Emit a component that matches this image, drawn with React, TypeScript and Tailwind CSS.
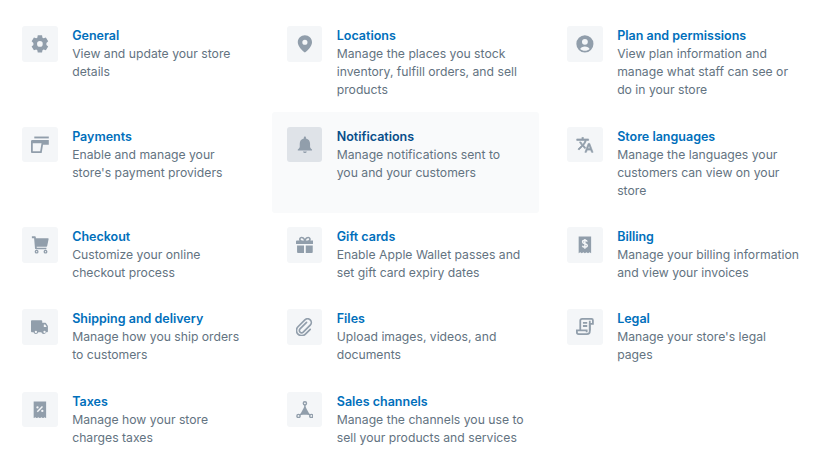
import React from "react";

type Item = { title: React.ReactNode; lines: string[]; icon: React.ReactNode; active?: boolean };

const Glyph = ({ children, vb = "0 0 20 20" }: { children: React.ReactNode; vb?: string }) => (
  <svg viewBox={vb} className="h-[17.8px] w-[17.8px] fill-[#919eab]">
    {children}
  </svg>
);

const Gear = () => (
  <Glyph>
    <path
      fillRule="evenodd"
      d="M7.6 0.4h4.8l.5 2.6 1.3.75 2.5-.9 2.6 4.3-2 1.75v2.2l2 1.75-2.6 4.3-2.500-.9-1.300.75-.5 2.600H7.600l-.5-2.600-1.300-.75-2.500.9-2.600-4.300 2-1.750v-2.200l-2-1.750 2.600-4.300 2.500.9 1.300-.75zM10 6.800a3.200 3.200 0 1 0 0 6.400 3.200 3.200 0 0 0 0-6.400z"
    />
  </Glyph>
);
const Card = () => (
  <Glyph>
    <path d="M3.700.6H20v2.100H3.700z" />
    <path
      fillRule="evenodd"
      d="M1.500 4.500H20v5.400h-6.500L12 19H1a1 1 0 0 1-1-1V6a1.500 1.500 0 0 1 1.500-1.500zM2 8.200V17h8.300l1.500-8.800z"
    />
  </Glyph>
);
const Cart = () => (
  <Glyph>
    <path
      fillRule="evenodd"
      d="M1 .4h3.400a1 1 0 0 1 1 .9l.1 1.100H19a.8.8 0 0 1 .8 1l-1.600 7.800a1 1 0 0 1-1 .8H6.400l.1 1.200h10.800v1.800H5.500a1 1 0 0 1-1-.9L3.500 2.400H1zM6.300 15.400a2.200 2.200 0 1 1-.01 4.400 2.200 2.200 0 0 1 .01-4.400zm0 1.500a.7.7 0 1 0 .01 1.400.7.7 0 0 0-.01-1.400zm10 -1.500a2.200 2.200 0 1 1-.01 4.400 2.200 2.200 0 0 1 .01-4.400zm0 1.500a.7.7 0 1 0 .01 1.400.7.7 0 0 0-.01-1.400z"
    />
  </Glyph>
);
const Truck = () => (
  <Glyph>
    <path
      fillRule="evenodd"
      d="M1 2.400h10.600a1 1 0 0 1 1 1v1.800h3.400a1 1 0 0 1 .8.4l2 3.200c.1.200.2.400.2.600V15a1 1 0 0 1-1 1h-1a2.800 2.800 0 0 1-5.400 0H8.200a2.800 2.800 0 0 1-5.400 0H1a1 1 0 0 1-1-1V3.400a1 1 0 0 1 1-1zM5.500 14.300a1.300 1.300 0 1 0 0 2.600 1.300 1.300 0 0 0 0-2.600zm9.700 0a1.300 1.300 0 1 0 0 2.600 1.300 1.300 0 0 0 0-2.600zM14.400 7.400v2.800h3.200l-1.600-2.800z"
    />
  </Glyph>
);
const Receipt = ({ children }: { children: React.ReactNode }) => (
  <Glyph>
    <path
      fillRule="evenodd"
      d="M3 .6h14v18.800l-1.750-1.200-1.750 1.200-1.750-1.200-1.750 1.200-1.750-1.200-1.750 1.200-1.750-1.200L3 19.400z"
    />
    {children}
  </Glyph>
);
const Pin = () => (
  <Glyph>
    <path
      fillRule="evenodd"
      d="M10 .4c4.400 0 8 3.400 8 7.700 0 4.600-5 9.600-8 11.500-3-1.900-8-6.900-8-11.500C2 3.800 5.600.4 10 .4zm0 4.800a2.900 2.900 0 1 0 0 5.800 2.900 2.900 0 0 0 0-5.800z"
    />
  </Glyph>
);
const Bell = () => (
  <Glyph>
    <path d="M10 .6c.7 0 1.200.5 1.200 1.200v.9c3 .6 4.600 3 4.600 6v3.400c0 1 1.200 2.200 2.200 3.200v.9H2v-.9c1-1 2.200-2.200 2.200-3.200V8.700c0-3 1.600-5.400 4.600-6v-.9C8.800 1.100 9.300.6 10 .6z" />
    <path d="M7.800 17.400h4.400c-.2 1-1.100 1.800-2.200 1.800s-2-.8-2.200-1.800z" />
  </Glyph>
);
const Gift = () => (
  <Glyph>
    <path
      fillRule="evenodd"
      d="M6.400.8c1.500 0 2.800.9 3.600 2.200C10.800 1.700 12.100.8 13.600.8c1.700 0 3 1.200 3 2.800 0 .6-.2 1.100-.5 1.500H19a1 1 0 0 1 1 1v3H0v-3a1 1 0 0 1 1-1h2.900a2.700 2.700 0 0 1-.5-1.500C3.400 2 4.700.8 6.400.8zm0 1.700c-.6 0-1.200.5-1.200 1.100 0 .8.900 1.500 3.800 1.500-.4-1.400-1.400-2.600-2.600-2.600zm7.200 0c-1.200 0-2.200 1.200-2.600 2.600 2.900 0 3.800-.7 3.800-1.500 0-.6-.6-1.100-1.200-1.100z"
    />
    <path d="M1.200 10.800H9V19H2.200a1 1 0 0 1-1-1zM11 10.800h7.800V18a1 1 0 0 1-1 1H11z" />
  </Glyph>
);
const Clip = () => (
  <svg viewBox="0 0 20 20" className="h-[17.8px] w-[17.8px] fill-none stroke-[#919eab] stroke-[1.9]">
    <path
      strokeLinecap="round"
      d="M12.500 5.200 5 12.700a2.600 2.600 0 0 0 3.700 3.700l8-8a4.300 4.300 0 0 0-6.100-6.100L2.700 10.200a6 6 0 0 0 8.500 8.500l5.500-5.500"
      transform="translate(-.4 -.2) scale(.98)"
    />
  </svg>
);
const Channels = () => (
  <Glyph>
    <path d="M10 6.500c.4 0 .7.2.9.5l4 7.200c.3.600-.1 1.300-.8 1.300H5.900c-.7 0-1.100-.7-.8-1.300l4-7.200c.2-.3.500-.5.900-.5z" />
    <path d="M9.200 4h1.600v4H9.200zM4 14.900l3.500-2 .8 1.400-3.500 2zM16 14.900l-3.500-2-.8 1.400 3.500 2z" />
    <path
      fillRule="evenodd"
      d="M10 0a2.600 2.600 0 1 1 0 5.200A2.600 2.600 0 0 1 10 0zm0 1.600a1 1 0 1 0 0 2 1 1 0 0 0 0-2zM2.800 14.200a2.600 2.600 0 1 1 0 5.200 2.600 2.600 0 0 1 0-5.200zm0 1.600a1 1 0 1 0 0 2 1 1 0 0 0 0-2zM17.200 14.200a2.600 2.600 0 1 1 0 5.200 2.600 2.600 0 0 1 0-5.200zm0 1.600a1 1 0 1 0 0 2 1 1 0 0 0 0-2z"
    />
  </Glyph>
);
const User = () => (
  <Glyph>
    <path
      fillRule="evenodd"
      d="M10 .4a9.600 9.600 0 1 1 0 19.200A9.600 9.600 0 0 1 10 .4zm0 4a3.300 3.300 0 1 0 0 6.600 3.300 3.300 0 0 0 0-6.600zm-5.300 11.300c1.300 1.300 3.200 2 5.300 2s4-.7 5.300-2c-.6-1.600-2.800-2.800-5.300-2.800s-4.700 1.200-5.300 2.800z"
    />
  </Glyph>
);
const Translate = () => (
  <svg viewBox="0 0 24 24" className="h-[17.8px] w-[17.8px] fill-[#919eab] stroke-[#919eab] stroke-[0.9]">
    <path d="M12.870 15.070l-2.540-2.510.03-.03c1.740-1.940 2.980-4.170 3.710-6.530H17V4h-7V2H8v2H1v1.990h11.170C11.500 7.920 10.440 9.750 9 11.350 8.070 10.320 7.300 9.190 6.690 8h-2c.73 1.630 1.730 3.170 2.980 4.560l-5.090 5.020L4 19l5-5 3.110 3.110.76-2.040zM18.500 10h-2L12 22h2l1.120-3h4.750L21 22h2l-4.500-12zm-2.620 7l1.620-4.330L19.120 17h-3.240z" />
  </svg>
);
const Scroll = () => (
  <svg viewBox="0 0 20 20" className="h-[17.8px] w-[17.8px] fill-none stroke-[#919eab] stroke-[2]">
    <path d="M4.800 14V3.200A2.200 2.200 0 0 1 7 1h10.500a1.500 1.500 0 0 1 1.500 1.500V6.500h-3.500V14" />
    <path d="M15.500 3v11.800a3.200 3.200 0 0 1-3.200 3.200H3a2 2 0 0 1-2-2v-2h11v2" />
    <path d="M7.800 5.400h4.800M7.800 9h4.800" />
  </svg>
);

const columns: Item[][] = [
  [
    { title: "General", lines: ["View and update your store", "details"], icon: <Gear /> },
    { title: "Payments", lines: ["Enable and manage your", "store's payment providers"], icon: <Card /> },
    { title: "Checkout", lines: ["Customize your online", "checkout process"], icon: <Cart /> },
    { title: "Shipping and delivery", lines: ["Manage how you ship orders", "to customers"], icon: <Truck /> },
    {
      title: "Taxes",
      lines: ["Manage how your store", "charges taxes"],
      icon: (
        <Receipt>
          <path className="fill-[#f4f6f8]" d="M12.300 5.600l1.200 1.200-5.800 5.800-1.200-1.200z" />
          <circle className="fill-[#f4f6f8]" cx="7.300" cy="7.200" r="1.300" />
          <circle className="fill-[#f4f6f8]" cx="12.700" cy="11.200" r="1.300" />
        </Receipt>
      ),
    },
  ],
  [
    { title: "Locations", lines: ["Manage the places you stock", "inventory, fulfill orders, and sell", "products"], icon: <Pin /> },
    { title: "Notifications", lines: ["Manage notifications sent to", "you and your customers"], icon: <Bell />, active: true },
    { title: "Gift cards", lines: ["Enable Apple Wallet passes and", "set gift card expiry dates"], icon: <Gift /> },
    { title: "Files", lines: ["Upload images, videos, and", "documents"], icon: <Clip /> },
    { title: "Sales channels", lines: ["Manage the channels you use to", "sell your products and services"], icon: <Channels /> },
  ],
  [
    { title: "Plan and permissions", lines: ["View plan information and", "manage what staff can see or", "do in your store"], icon: <User /> },
    { title: "Store languages", lines: ["Manage the languages your", "customers can view on your", "store"], icon: <Translate /> },
    {
      title: "Billing",
      lines: ["Manage your billing information", "and view your invoices"],
      icon: (
        <Receipt>
          <path
            className="fill-none stroke-[#f4f6f8] stroke-[1.6]"
            d="M12.600 6.300c-.3-1-1.300-1.500-2.600-1.500-1.500 0-2.600.7-2.600 1.900 0 2.700 5.300 1.400 5.300 4.100 0 1.200-1.200 1.900-2.700 1.900-1.400 0-2.500-.6-2.800-1.700M10 3.400v11"
          />
        </Receipt>
      ),
    },
    { title: "Legal", lines: ["Manage your store's legal", "pages"], icon: <Scroll /> },
  ],
];

function Row({ item }: { item: Item }) {
  return (
    <div className={`flex gap-[14.4px] rounded-[3px] p-[14.2px] pl-[14.4px] ${item.active ? "bg-[#f9fafb]" : ""}`}>
      <div
        className={`flex h-[35.6px] w-[35.6px] shrink-0 items-center justify-center rounded-[3px] ${
          item.active ? "bg-[#dfe3e8]" : "bg-[#f4f6f8]"
        }`}
      >
        {item.icon}
      </div>
      <div className="-mb-px mt-px min-w-0 leading-[18px]">
        <div className={`text-[12.5px] font-semibold ${item.active ? "text-[#084e8a]" : "text-[#006fbb]"}`}>{item.title}</div>
        {item.lines.map((l) => (
          <div key={l} className="whitespace-nowrap text-[12.2px] text-[#637381]">
            {l}
          </div>
        ))}
      </div>
    </div>
  );
}

export default function App() {
  return (
    <div className="h-[472px] w-[827px] overflow-hidden bg-white pl-[7.8px] pt-[12.1px] font-['Inter',sans-serif]">
      <div className="grid grid-cols-[251.2px_267px_267px] gap-x-[13.4px]">
        {[0, 1, 2, 3, 4].flatMap((r) =>
          columns.map((c, i) => (c[r] ? <Row key={`${r}-${i}`} item={c[r]} /> : <div key={`${r}-${i}`} />)),
        )}
      </div>
    </div>
  );
}
